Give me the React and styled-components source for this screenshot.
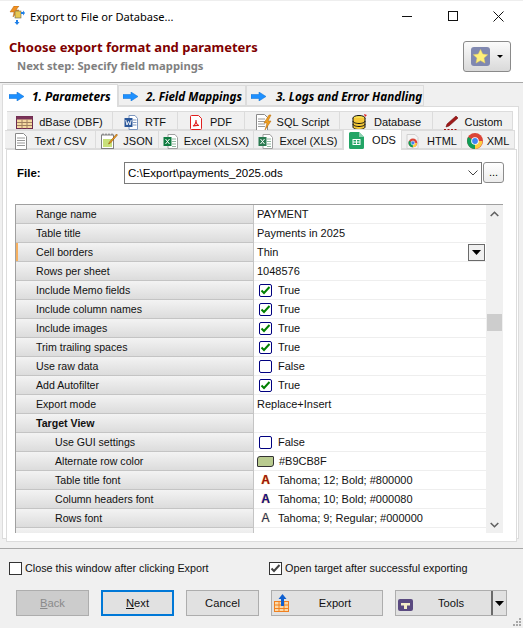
import React from 'react';
import styled, { createGlobalStyle } from 'styled-components';

const Global = createGlobalStyle`
  html, body { margin: 0; padding: 0; background: #f0f0f0; }
  * { box-sizing: border-box; }
`;
const HEAD = `"Noto Sans", "Liberation Sans", sans-serif`;
const FONT = `"Liberation Sans", "Noto Sans", sans-serif`;

const Win = styled.div`
  width: 523px; height: 628px; background: #f0f0f0; overflow: hidden;
  display: flex; flex-direction: column; font-family: ${FONT}; font-size: 11px; color: #000;
`;
const TitleBar = styled.div`
  height: 31px; background: #fff; display: flex; align-items: center; padding-left: 9px; flex: none;
  border-top: 1px solid #eee;
`;
const TitleText = styled.span` margin-left: 5px; font-size: 11.1px; font-family: ${HEAD}; `;
const WinControls = styled.div` margin-left: auto; display: flex; margin-right: 2px; `;
const WinBtn = styled.div` width: 45.5px; height: 20px; display: flex; align-items: center; justify-content: center; `;
const Header = styled.div`
  height: 52px; flex: none; background: #fff; border-bottom: 1px solid #a8a8a8; font-family: ${HEAD};
  display: flex; align-items: flex-start; justify-content: space-between; padding: 6px 12px 0 9px;
`;
const HeadTitle = styled.div` font-weight: 700; font-size: 13px; color: #800000; line-height: 18px; margin-top: 1px; `;
const HeadSub = styled.div` font-weight: 700; font-size: 11.25px; color: #808080; line-height: 16px; margin: 2px 0 0 8px; `;
const StarBtn = styled.div`
  width: 48px; height: 31px; margin-top: 4px; border: 1px solid #8a8a8a; border-radius: 3px;
  background: linear-gradient(#fbfbfb, #d9d9d9); display: flex; align-items: center; padding-left: 7px; gap: 7px;
`;
const Caret = styled.span`
  width: 0; height: 0; border-left: 3px solid transparent; border-right: 3px solid transparent; border-top: 3px solid #000;
  display: block;
`;
const StepRow = styled.div` height: 23px; flex: none; display: flex; align-items: flex-end; padding-left: 2px; background: #f0f0f0; position: relative; z-index: 1; font-family: ${HEAD}; `;
const StepTab = styled.div`
  width: ${p => p.$w}px; height: ${p => (p.$active ? 23 : 21)}px; margin-bottom: ${p => (p.$active ? -1 : 0)}px;
  padding-left: ${p => p.$pad}px; padding-top: ${p => (p.$active ? 0 : 1)}px;
  background: ${p => (p.$active ? '#fff' : '#f0f0f0')}; border: 1px solid #dcdcdc; border-bottom: ${p => (p.$active ? 'none' : '1px solid #dcdcdc')};
  display: flex; align-items: center; gap: ${p => p.$gap}px; font-weight: 700; font-style: italic; font-size: ${p => p.$fs ?? 11.6}px;
`;
const Page = styled.div`
  margin-left: 2px; width: 517px; height: 433px; background: #fff; border: 1px solid #dcdcdc; flex: none;
  padding: 4px 2px 0 2px;
`;
const TabRow = styled.div` height: 19px; display: flex; padding-left: ${p => p.$pl}px; align-items: flex-end; `;
const FormatTab = styled.div`
  width: ${p => p.$w}px; height: ${p => (p.$active ? 21 : 19)}px; flex: none;
  margin-bottom: ${p => (p.$active ? -1 : 0)}px; position: relative; padding-top: ${p => (p.$active ? 0 : 3)}px;
  background: ${p => (p.$active ? '#fff' : '#f0f0f0')}; border: 1px solid #dcdcdc; border-left-width: ${p => (p.$active ? 1 : 0)}px;
  border-bottom: ${p => (p.$active ? 'none' : '1px solid #dcdcdc')};
  display: flex; align-items: center; justify-content: center; gap: ${p => p.$gap ?? 5}px; white-space: nowrap; color: #111;
`;
const Inner = styled.div`
  width: 511px; height: 393px; margin-left: 1px; border: 1px solid #dcdcdc; padding: 11px 0 0 9px; background: #fff;
`;
const FileRow = styled.div` display: flex; align-items: center; height: 23px; `;
const FileLabel = styled.div` width: 108px; font-weight: 700; font-size: 11.5px; padding-left: 1px; `;
const FileInput = styled.div`
  width: 358px; height: 22px; border: 1px solid #7a7a7a; display: flex; align-items: center; padding-left: 3px;
  justify-content: space-between; padding-right: 3px; font-size: 11.5px;
`;
const BrowseBtn = styled.div`
  width: 21px; height: 21px; margin-left: 1px; border: 1px solid #8c8c8c; border-radius: 3px; background: linear-gradient(#fff, #ececec);
  display: flex; align-items: center; justify-content: center; font-size: 11px; line-height: 1; padding-bottom: 1px;
`;
const GridWrap = styled.div`
  margin-top: 20px; margin-left: -1px; width: 488px; height: 329px; border-top: 1px solid #a0a0a0; border-left: 1px solid #a0a0a0;
  display: flex; overflow: hidden;
`;
const Rows = styled.div` width: 470px; flex: none; overflow: hidden; `;
const Row = styled.div` height: 19px; display: flex; `;
const PropCell = styled.div`
  width: 238px; flex: none; height: 19px; line-height: 18px; font-size: 10.6px;
  padding-left: ${p => (p.$indent ? 39 : 20)}px; font-weight: ${p => (p.$bold ? 700 : 400)};
  background: linear-gradient(#f3f3f3, #dcdcdc); border-bottom: 1px solid #c4c4c4; border-right: 1px solid #c4c4c4;
  box-shadow: ${p => (p.$mark ? 'inset 2px 0 0 #f5b060' : 'none')}; color: #111;
`;
const ValCell = styled.div`
  flex: 1; height: 19px; display: flex; align-items: center; padding-left: 3px; border-bottom: 1px solid #eeeeee; color: #111;
  position: relative; white-space: nowrap; font-size: 11px;
`;
const Check = styled.span`
  width: 13px; height: 13px; margin: 0 6px 0 2px; border: 1px solid #000080; border-radius: 2px; flex: none;
  display: flex; align-items: center; justify-content: center; background: #fff;
`;
const Swatch = styled.span`
  width: 17px; height: 11px; margin: 0 5px 0 0; background: #b9cb8f; border: 1px solid #333; border-radius: 3px 1px 3px 1px; flex: none;
`;
const FontA = styled.span`
  width: 13px; margin: 0 6px 0 2px; text-align: center; font-weight: ${p => (p.$b ? 700 : 400)}; color: ${p => p.$c};
  font-size: 12px; text-shadow: 0 0 1px ${p => p.$s}; flex: none;
`;
const Combo = styled.span`
  position: absolute; right: 1px; top: 1px; width: 17px; height: 17px; border: 1px solid #6a6a6a; background: #f0f0f0;
  display: flex; align-items: center; justify-content: center;
`;
const ScrollTrack = styled.div`
  width: 17px; flex: none; background: #f0f0f0; height: 100%; display: flex; flex-direction: column; align-items: center;
`;
const Chev = styled.div` height: 17px; display: flex; align-items: center; justify-content: center; flex: none; `;
const Thumb = styled.div` width: 15px; height: 17px; background: #cdcdcd; margin-top: 92px; flex: none; `;
const Spacer = styled.div` flex: 1; `;
const Footer = styled.div` flex: 1; border-top: 1px solid #a8a8a8; margin-top: 9px; display: flex; flex-direction: column; position: relative; `;
const OptRow = styled.div` display: flex; height: 14px; margin-top: 12px; `;
const Opt = styled.label` display: flex; align-items: center; gap: 3px; width: ${p => p.$w}px; margin-left: ${p => p.$ml}px; font-size: 10.8px; color: #111; white-space: nowrap; `;
const Box = styled.span`
  width: 13px; height: 13px; border: 1px solid #333; background: #fff; flex: none; display: flex; align-items: center; justify-content: center;
`;
const BtnRow = styled.div` display: flex; margin-top: 15px; padding-left: 16px; `;
const Btn = styled.div`
  width: ${p => p.$w}px; height: 26px; margin-right: ${p => p.$mr}px; flex: none; position: relative; padding-left: ${p => p.$pl ?? 0}px;
  border: ${p => (p.$def ? '2px solid #0078d7' : '1px solid #adadad')};
  background: ${p => (p.$off ? '#cccccc' : '#e1e1e1')}; color: ${p => (p.$off ? '#8a8a8a' : '#111')};
  display: flex; align-items: center; justify-content: center; font-size: 11.2px;
`;
const BtnIcon = styled.span` position: absolute; left: 2px; top: 3px; display: flex; `;
const BtnSplit = styled.span`
  position: absolute; right: 0; top: 0; bottom: 0; width: 15px; border-left: 2px solid #6a6a6a; display: flex; align-items: center; justify-content: center;
`;
const Grip = styled.svg` position: absolute; right: 1px; bottom: 1px; `;

const Arrow = () => (
  <svg width="16" height="9" viewBox="0 0 16 9"><path d="M0 2.5h8V0l7 4.5L8 9V6.5H0z" fill="#1e90ff" stroke="#0a6fd0" strokeWidth=".5" /></svg>
);
const Sheet = ({ w = 14, h = 17, children }) => (
  <svg width={w} height={h} viewBox={`0 0 ${w} ${h}`} style={{ flex: 'none' }}>{children}</svg>
);
const Lines = ({ x = 3, to = 11 }) => [5, 7.5, 10, 12.5].map(y => <path key={y} d={`M${x} ${y}H${to}`} stroke="#999" />);
const Doc = () => <path d="M1.5.5h8l3 3v13h-11z" fill="#fff" stroke="#8a8a8a" />;

const DbfIcon = () => (
  <svg width="17" height="13" viewBox="0 0 17 13"><rect x=".5" y=".5" width="16" height="12" fill="#f5d9a0" stroke="#6e2a4e" /><rect x=".5" y=".5" width="16" height="3" fill="#7a3358" /><path d="M6 3.5v9M11 3.5v9M1 6.5h15M1 9.5h15" stroke="#a08060" /></svg>
);
const RtfIcon = () => (
  <Sheet w={16} h={15}><path d="M5 .5h6l2.500 3v11H5z" fill="#fff" stroke="#7f98c0" /><path d="M9 5h3.500M9 7.500h3.500M9 10h3.500" stroke="#7f98c0" /><rect x=".5" y="3" width="8" height="9" fill="#2a5699" /><path d="M1.800 5l1.200 5 1.500-3.500L6 10l1.200-5" fill="none" stroke="#fff" strokeWidth=".9" /></Sheet>
);
const PdfIcon = () => (
  <Sheet w={12} h={15}><path d="M1.500.5h7l3 3v10a1 1 0 0 1-1 1h-9a1 1 0 0 1-1-1v-12a1 1 0 0 1 1-1z" fill="#fff" stroke="#e02020" /><path d="M3 11c2-1 3-3 3-6 0 3 1 5 3 5.500-2-.5-4 0-6 .5z" fill="none" stroke="#e02020" strokeWidth="1.100" /></Sheet>
);
const SqlIcon = () => (
  <Sheet w={17} h={17}><Doc /><Lines to={10} /><path d="M14 1l-5 8h3l-2 7 6-9h-3l3-6z" fill="#f0a020" stroke="#b06000" strokeWidth=".5" /></Sheet>
);
const DbIcon = () => (
  <svg width="17" height="17" viewBox="0 0 17 17"><ellipse cx="8" cy="4" rx="6" ry="2.500" fill="#f8e050" stroke="#111" /><path d="M2 4v9c0 1.400 2.700 2.500 6 2.500s6-1.100 6-2.500V4" fill="#f4c838" stroke="#111" /><path d="M2 7c0 1.400 2.700 2.500 6 2.500S14 8.400 14 7M2 10c0 1.400 2.700 2.500 6 2.500s6-1.100 6-2.500" fill="none" stroke="#111" /><path d="M13 0l3 1-2 2z" fill="#e02020" /></svg>
);
const PenIcon = () => (
  <svg width="16" height="15" viewBox="0 0 16 15"><path d="M13 1l2 2-9 8-3 1 1-3z" fill="#a01818" stroke="#701010" strokeWidth=".6" /><path d="M1 14.500h14" stroke="#a01818" strokeDasharray="2 1.500" /></svg>
);
const TxtIcon = () => <Sheet w={13} h={17}><Doc /><Lines /></Sheet>;
const JsonIcon = () => (
  <Sheet w={17} h={16}><rect x=".5" y="2" width="12" height="13.500" fill="#fff" stroke="#808080" /><path d="M2 2V.5M5 2V.5M8 2V.5M11 2V.5" stroke="#666" /><rect x="2" y="6" width="9" height="8" fill="#c8e07a" /><path d="M15.500 1l1 1-7 8-2 1 1-2z" fill="#f0a020" stroke="#804000" strokeWidth=".5" /></Sheet>
);
const XlIcon = ({ c = '#107c41' }) => (
  <Sheet w={16} h={15}><path d="M5 .5h7l2.500 3v11H5z" fill="#fff" stroke="#a0a0a0" /><path d="M9 5h4M9 7.500h4M9 10h4M9 12.500h4" stroke="#8fb89f" /><rect x=".5" y="3" width="8" height="9" fill={c} /><path d="M2.500 5l4 5M6.500 5l-4 5" stroke="#fff" /></Sheet>
);
const OdsIcon = () => (
  <svg width="15" height="17" viewBox="0 0 15 17"><path d="M1.500 0H10l5 5v10.500a1.500 1.500 0 0 1-1.500 1.500h-12A1.500 1.500 0 0 1 0 15.500v-14A1.500 1.500 0 0 1 1.500 0z" fill="#23a566" /><path d="M10 0l5 5h-5z" fill="#8ed1b1" /><rect x="4" y="7.500" width="7" height="5" fill="none" stroke="#fff" /><path d="M4 10h7M7.500 7.500v5" stroke="#fff" /></svg>
);
const Chrome = ({ s }) => (
  <svg width={s} height={s} viewBox="0 0 16 16"><circle cx="8" cy="8" r="8" fill="#db4437" /><path d="M8 8L1.100 4A8 8 0 0 0 8 16l4-8z" fill="#0f9d58" /><path d="M8 8h7.500A8 8 0 0 1 8 16z" fill="#ffcd40" /><circle cx="8" cy="8" r="3.800" fill="#fff" /><circle cx="8" cy="8" r="2.900" fill="#4285f4" /></svg>
);
const HtmlIcon = () => (
  <Sheet w={13} h={15}><path d="M1 .5h8l3 3v11H1z" fill="#f4f4f4" stroke="#d0d0d0" /><g transform="translate(2.500 4.500) scale(.55)"><circle cx="8" cy="8" r="8" fill="#db4437" /><path d="M8 8L1.100 4A8 8 0 0 0 8 16l4-8z" fill="#0f9d58" /><path d="M8 8h7.500A8 8 0 0 1 8 16z" fill="#ffcd40" /><circle cx="8" cy="8" r="3.500" fill="#4285f4" stroke="#fff" /></g></Sheet>
);
const Tick = ({ c = '#008000' }) => (
  <svg width="11" height="9" viewBox="0 0 11 9"><path d="M1.500 4.500L4 7l5.500-6" fill="none" stroke={c} strokeWidth="2" /></svg>
);
const AppIcon = () => (
  <svg width="16" height="20" viewBox="0 0 16 20"><path d="M5 0h5L7 4h3l-6 7 1-5H1z" fill="#f09020" stroke="#a05000" strokeWidth=".4" /><rect x="6" y="5" width="6" height="7" fill="#e8c850" stroke="#665" strokeWidth=".6" /><path d="M12 6h2V4.500L16 7l-2 2.500V8h-2zM7 14h2v2h1.500L8 19l-2.500-3H7z" fill="#2080e8" /></svg>
);
const SelCaret = () => (
  <svg width="9" height="5" viewBox="0 0 9 5"><path d="M0 0h9L4.500 5z" fill="#000" /></svg>
);

const rows = [
  ['Range name', { t: 'PAYMENT' }],
  ['Table title', { t: 'Payments in 2025' }],
  ['Cell borders', { t: 'Thin', combo: true }, { mark: true }],
  ['Rows per sheet', { t: '1048576' }],
  ['Include Memo fields', { c: true }],
  ['Include column names', { c: true }],
  ['Include images', { c: true }],
  ['Trim trailing spaces', { c: true }],
  ['Use raw data', { c: false }],
  ['Add Autofilter', { c: true }],
  ['Export mode', { t: 'Replace+Insert' }],
  ['Target View', { t: '' }, { bold: true }],
  ['Use GUI settings', { c: false }, { indent: true }],
  ['Alternate row color', { swatch: '#B9CB8F' }, { indent: true }],
  ['Table title font', { a: ['#a01010', '#e0a000', true], t: 'Tahoma; 12; Bold; #800000' }, { indent: true }],
  ['Column headers font', { a: ['#101090', '#e08000', true], t: 'Tahoma; 10; Bold; #000080' }, { indent: true }],
  ['Rows font', { a: ['#203060', '#e0a040', false], t: 'Tahoma; 9; Regular; #000000' }, { indent: true }],
  ['Data font', { t: '' }, { indent: true }],
];

const Value = ({ v }) => {
  if (v.c !== undefined) return <ValCell><Check>{v.c && <Tick />}</Check>{v.c ? 'True' : 'False'}</ValCell>;
  if (v.swatch) return <ValCell><Swatch />{v.swatch}</ValCell>;
  if (v.a) return <ValCell><FontA $c={v.a[0]} $s={v.a[1]} $b={v.a[2]}>A</FontA>{v.t}</ValCell>;
  return <ValCell>{v.t}{v.combo && <Combo><SelCaret /></Combo>}</ValCell>;
};

export default function App() {
  return (
    <Win>
      <Global />
      <TitleBar>
        <AppIcon />
        <TitleText>Export to File or Database...</TitleText>
        <WinControls>
          <WinBtn><svg width="10" height="10"><path d="M0 5.500h10" stroke="#111" /></svg></WinBtn>
          <WinBtn><svg width="10" height="10"><rect x=".5" y=".5" width="9" height="9" fill="none" stroke="#111" /></svg></WinBtn>
          <WinBtn><svg width="11" height="11"><path d="M.5.500l10 10M10.500.500l-10 10" stroke="#111" /></svg></WinBtn>
        </WinControls>
      </TitleBar>
      <Header>
        <div>
          <HeadTitle>Choose export format and parameters</HeadTitle>
          <HeadSub>Next step: Specify field mappings</HeadSub>
        </div>
        <StarBtn>
          <svg width="19" height="19" viewBox="0 0 19 19"><rect width="19" height="19" rx="3" fill="#8088b0" /><path d="M9.500 2.500l2.200 4.600 5 .6-3.700 3.400 1 5-4.500-2.500L5 16.100l1-5-3.700-3.400 5-.6z" fill="#fff07a" stroke="#e8d060" strokeWidth=".5" /></svg>
          <Caret />
        </StarBtn>
      </Header>
      <StepRow>
        <StepTab $w={116} $pad={6} $gap={7} $fs={11.9} $active><Arrow /><span>1. Parameters</span></StepTab>
        <StepTab $w={128} $pad={4} $gap={7}><Arrow /><span>2. Field Mappings</span></StepTab>
        <StepTab $w={178} $pad={4} $gap={9} $fs={11.7}><Arrow /><span>3. Logs and Error Handling</span></StepTab>
      </StepRow>
      <Page>
        <TabRow $pl={2}>
          <FormatTab $w={106} $gap={6}><DbfIcon />dBase (DBF)</FormatTab>
          <FormatTab $w={65}><RtfIcon />RTF</FormatTab>
          <FormatTab $w={67} $gap={8}><PdfIcon />PDF</FormatTab>
          <FormatTab $w={95}><SqlIcon />SQL Script</FormatTab>
          <FormatTab $w={93} $gap={6}><DbIcon />Database</FormatTab>
          <FormatTab $w={80} $gap={6}><PenIcon />Custom</FormatTab>
        </TabRow>
        <TabRow $pl={0}>
          <FormatTab $w={91} $gap={8}><TxtIcon />Text / CSV</FormatTab>
          <FormatTab $w={63}><JsonIcon />JSON</FormatTab>
          <FormatTab $w={95} $gap={5}><XlIcon />Excel (XLSX)</FormatTab>
          <FormatTab $w={89} $gap={5}><XlIcon c="#2a7a50" />Excel (XLS)</FormatTab>
          <FormatTab $w={59} $active $gap={8}><OdsIcon />ODS</FormatTab>
          <FormatTab $w={60} $gap={8}><HtmlIcon />HTML</FormatTab>
          <FormatTab $w={53} $gap={4}><Chrome s={16} />XML</FormatTab>
        </TabRow>
        <Inner>
          <FileRow>
            <FileLabel>File:</FileLabel>
            <FileInput>
              <span>C:\Export\payments_2025.ods</span>
              <svg width="10" height="6" viewBox="0 0 10 6"><path d="M.500.500L5 5 9.500.500" fill="none" stroke="#444" /></svg>
            </FileInput>
            <BrowseBtn>...</BrowseBtn>
          </FileRow>
          <GridWrap>
            <Rows>
              {rows.map(([name, v, o = {}]) => (
                <Row key={name}>
                  <PropCell $indent={o.indent} $bold={o.bold} $mark={o.mark}>{name}</PropCell>
                  <Value v={v} />
                </Row>
              ))}
            </Rows>
            <ScrollTrack>
              <Chev><svg width="9" height="6" viewBox="0 0 9 6"><path d="M.700 5L4.500 1.300 8.300 5" fill="none" stroke="#606060" strokeWidth="1.600" /></svg></Chev>
              <Thumb />
              <Spacer />
              <Chev><svg width="9" height="6" viewBox="0 0 9 6"><path d="M.700 1L4.500 4.700 8.300 1" fill="none" stroke="#606060" strokeWidth="1.600" /></svg></Chev>
            </ScrollTrack>
          </GridWrap>
        </Inner>
      </Page>
      <Footer>
        <OptRow>
          <Opt $w={260} $ml={9}><Box />Close this window after clicking Export</Opt>
          <Opt $w={240} $ml={0}><Box><Tick c="#444" /></Box>Open target after successful exporting</Opt>
        </OptRow>
        <BtnRow>
          <Btn $w={73} $mr={12} $off><span><u>B</u>ack</span></Btn>
          <Btn $w={73} $mr={12} $def><span><u>N</u>ext</span></Btn>
          <Btn $w={73} $mr={12}>Cancel</Btn>
          <Btn $w={112} $mr={12} $pl={16}>
            <BtnIcon>
              <svg width="16" height="18" viewBox="0 0 16 18"><rect x=".5" y="7.500" width="14" height="10" fill="#fbd9a8" stroke="#f08020" /><path d="M1 11h13M1 14.500h13M5 8v9M10 8v9" stroke="#f08020" /><path d="M8.500 0l4 5h-2.500v7H7V5H4.500z" fill="#1060d0" /></svg>
            </BtnIcon>
            Export
          </Btn>
          <Btn $w={112} $mr={0}>
            <BtnIcon>
              <svg width="16" height="18" viewBox="0 0 16 18"><rect x="0" y="5" width="15" height="12" rx="2" fill="#5a4a80" /><path d="M3 9h9v2.500H9V15H6v-3.500H3z" fill="#f5edc8" /></svg>
            </BtnIcon>
            Tools
            <BtnSplit><SelCaret /></BtnSplit>
          </Btn>
        </BtnRow>
        <Grip width="10" height="10" viewBox="0 0 10 10"><path d="M7 1h2v2H7zM4 4h2v2H4zM7 4h2v2H7zM1 7h2v2H1zM4 7h2v2H4zM7 7h2v2H7z" fill="#a8a8a8" /></Grip>
      </Footer>
    </Win>
  );
}
